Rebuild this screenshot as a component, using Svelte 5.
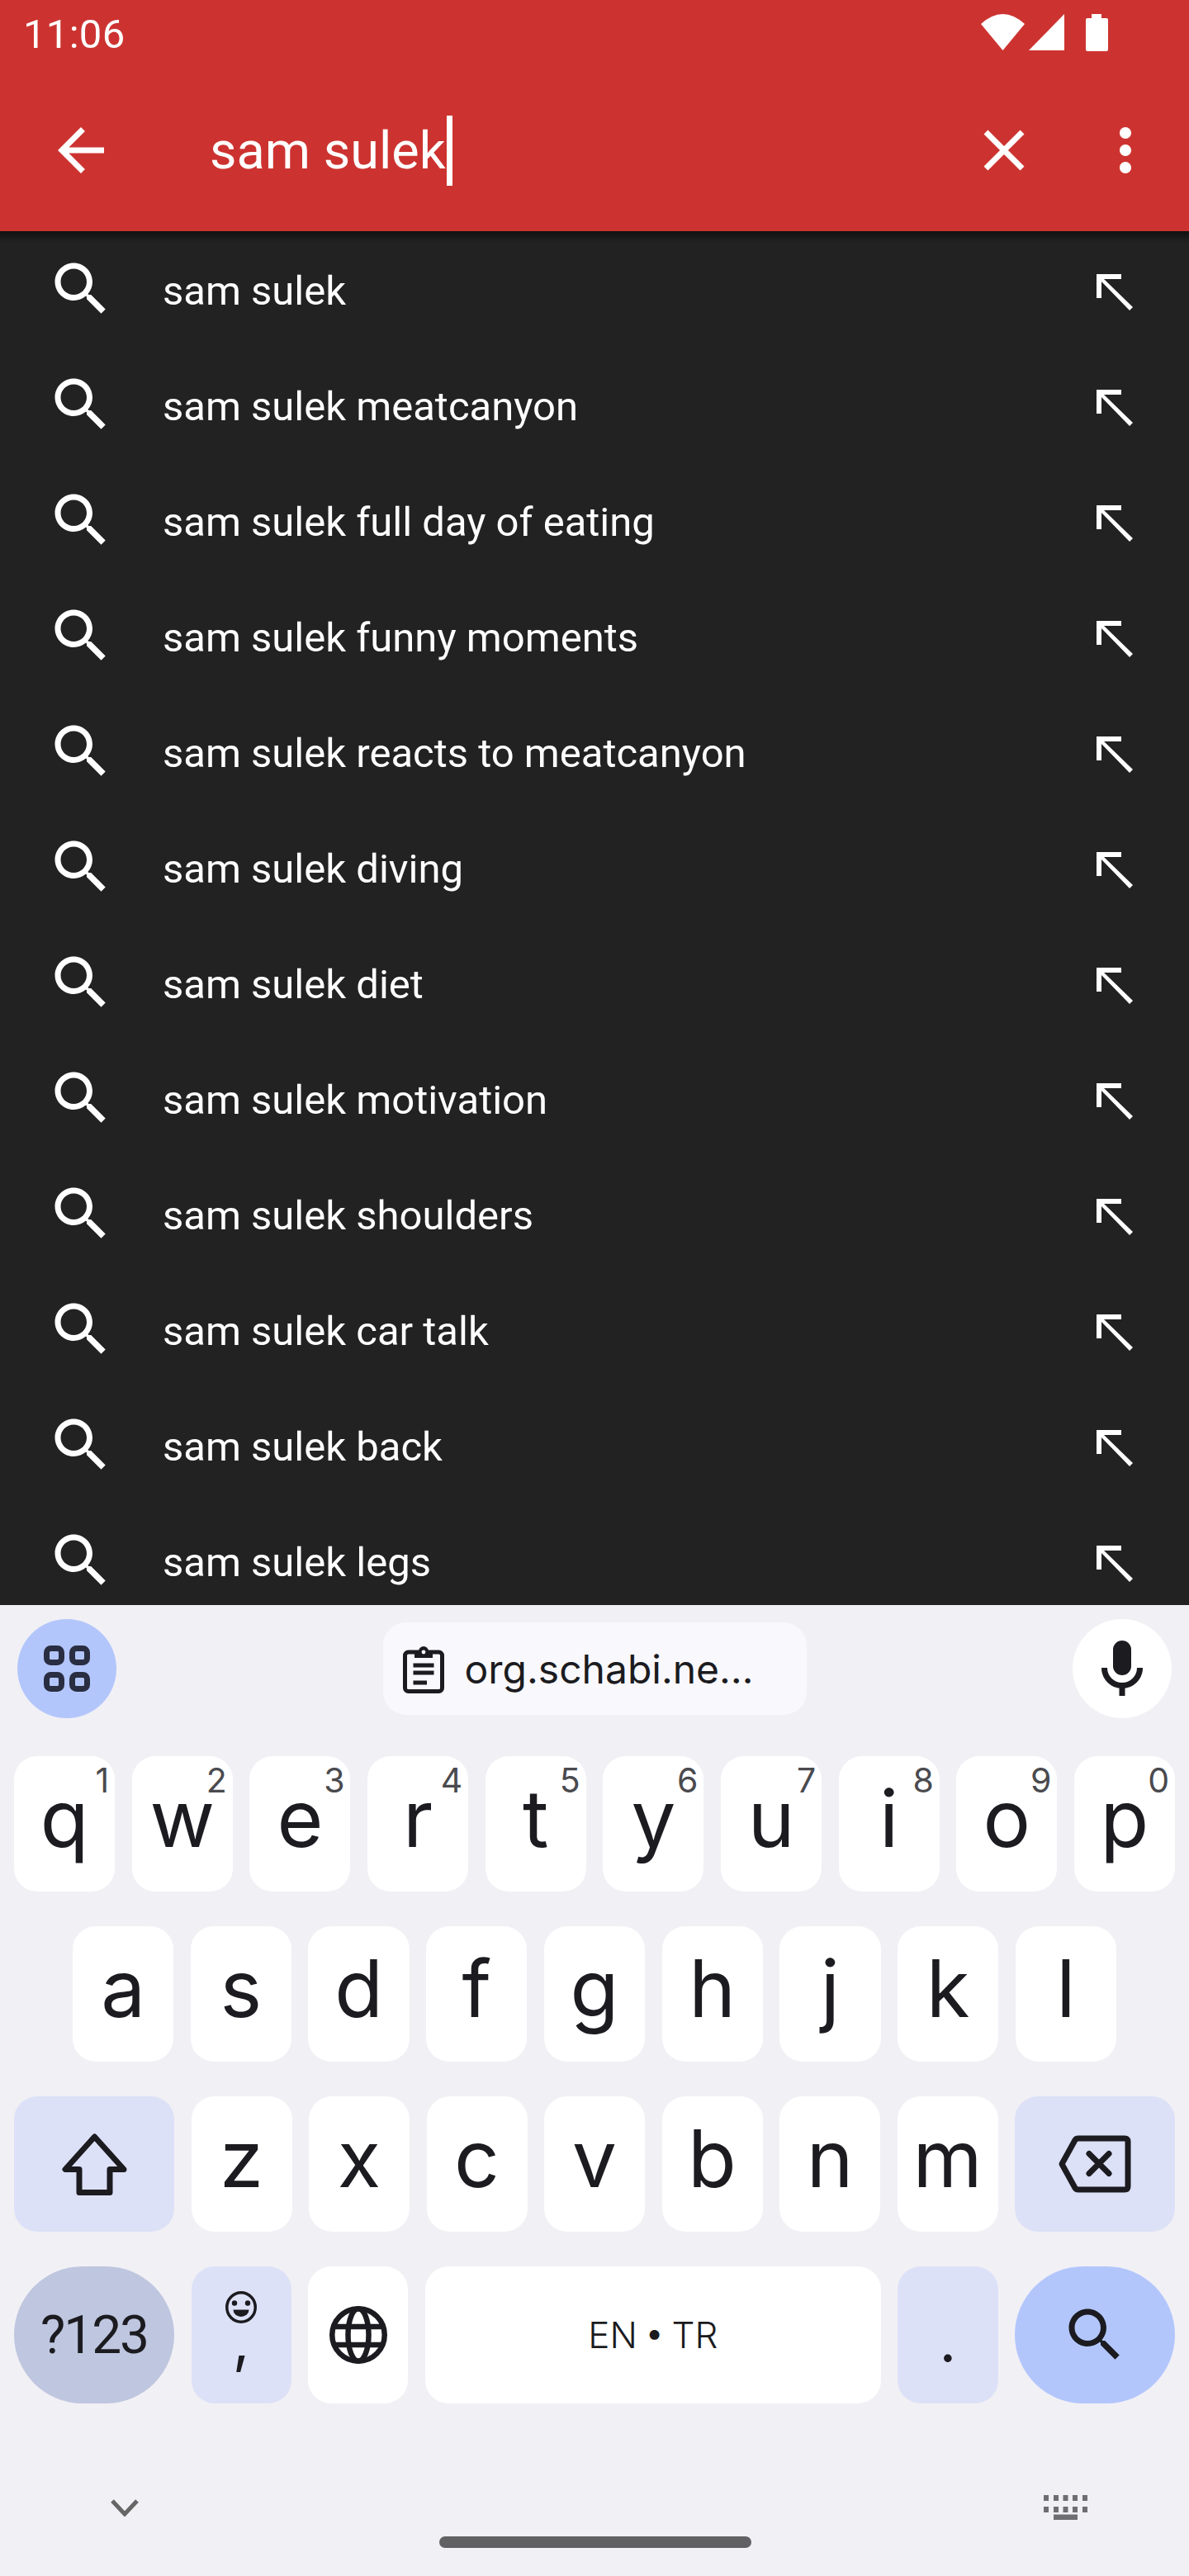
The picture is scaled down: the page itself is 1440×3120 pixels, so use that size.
<script>
	const suggestions = [
		"sam sulek",
		"sam sulek meatcanyon",
		"sam sulek full day of eating",
		"sam sulek funny moments",
		"sam sulek reacts to meatcanyon",
		"sam sulek diving",
		"sam sulek diet",
		"sam sulek motivation",
		"sam sulek shoulders",
		"sam sulek car talk",
		"sam sulek back",
		"sam sulek legs"
	];

	const topRow = [
		["q", "1"], ["w", "2"], ["e", "3"], ["r", "4"], ["t", "5"],
		["y", "6"], ["u", "7"], ["i", "8"], ["o", "9"], ["p", "0"]
	];
	const homeRow = ["a", "s", "d", "f", "g", "h", "j", "k", "l"];
	const lowerRow = ["z", "x", "c", "v", "b", "n", "m"];

	const searchPath = "M15.5 14h-.79l-.28-.27C15.41 12.59 16 11.11 16 9.5 16 5.91 13.09 3 9.5 3S3 5.91 3 9.5 5.91 16 9.5 16c1.61 0 3.09-.59 4.23-1.57l.27.28v.79l5 4.99L20.49 19l-4.99-5zm-6 0C7.01 14 5 11.99 5 9.5S7.01 5 9.5 5 14 7.01 14 9.5 11.99 14 9.5 14z";
</script>

<div class="phone">
	<header class="appbar">
		<div class="status">
			<span class="time">11:06</span>
			<div class="status-icons">
				<svg class="wifi" viewBox="0 0 53 44"><path d="M0 12Q26.5-12 53 12L26.5 44Z" /></svg>
				<svg class="signal" viewBox="0 0 43 44"><path d="M0 44L43 0V44Z" /></svg>
				<svg class="battery" viewBox="0 0 27 45"><path d="M7 0H19V5H25Q27 5 27 7V43Q27 45 25 45H2Q0 45 0 43V7Q0 5 2 5H7Z" /></svg>
			</div>
		</div>
		<div class="toolbar">
			<svg class="tool-icon" viewBox="0 0 24 24"><path d="M20 11H7.83l5.59-5.59L12 4l-8 8 8 8 1.41-1.41L7.83 13H20v-2z" /></svg>
			<div class="query"><span>sam sulek</span><i class="caret"></i></div>
			<svg class="tool-icon" viewBox="0 0 24 24"><path d="M19 6.41L17.59 5 12 10.59 6.41 5 5 6.41 10.59 12 5 17.59 6.41 19 12 13.41 17.59 19 19 17.59 13.41 12z" /></svg>
			<svg class="tool-icon more" viewBox="0 0 24 24"><path d="M12 8c1.1 0 2-.9 2-2s-.9-2-2-2-2 .9-2 2 .9 2 2 2zm0 2c-1.1 0-2 .9-2 2s.9 2 2 2 2-.9 2-2-.9-2-2-2zm0 6c-1.1 0-2 .9-2 2s.9 2 2 2 2-.9 2-2-.9-2-2-2z" /></svg>
		</div>
	</header>

	<main class="results">
		<div class="shadow"></div>
		{#each suggestions as text}
			<div class="row">
				<svg class="row-search" viewBox="0 0 24 24"><path d={searchPath} /></svg>
				<span class="row-text">{text}</span>
				<svg class="row-arrow" viewBox="0 0 44 44"><path d="M0 0H30V6H9L44 40 40 44 6 9V29H0Z" /></svg>
			</div>
		{/each}
	</main>

	<section class="keyboard">
		<div class="suggest">
			<div class="round apps">
				<svg class="apps-icon" viewBox="0 0 56 56">
					<rect x="3.5" y="3.5" width="18" height="17" rx="5" />
					<rect x="34.5" y="3.5" width="18" height="17" rx="5" />
					<rect x="3.5" y="35.5" width="18" height="17" rx="5" />
					<rect x="34.5" y="35.5" width="18" height="17" rx="5" />
				</svg>
			</div>
			<div class="chip">
				<svg class="clip-icon" viewBox="0 0 50 58">
					<rect class="clip-body" x="2.5" y="8" width="45" height="47.5" rx="4" />
					<path class="clip-top" d="M14 7H19A6 6 0 0 1 31 7H36V15H14Z" />
					<circle class="clip-hole" cx="25" cy="8" r="2.4" />
					<path class="clip-lines" d="M12.500 24H37.500M12.500 33H37.500M12.500 45H29" />
				</svg>
				<span class="chip-text">org.schabi.ne…</span>
			</div>
			<div class="round mic">
				<svg class="mic-icon" viewBox="0 0 50 67">
					<rect x="14" y="0" width="22" height="42" rx="11" />
					<path d="M3.500 33A21.500 21.500 0 0 0 46.500 33M25 53V67" />
				</svg>
			</div>
		</div>

		<div class="keys">
			<div class="key-row">
				{#each topRow as [letter, hint]}
					<div class="key letter">{letter}<span class="hint">{hint}</span></div>
				{/each}
			</div>
			<div class="key-row home">
				{#each homeRow as letter}
					<div class="key letter">{letter}</div>
				{/each}
			</div>
			<div class="key-row">
				<div class="key wide tint">
					<svg class="shift" viewBox="0 0 79 76"><path d="M39.500 5L4 44.500H21V72.500H58V44.500H75Z" /></svg>
				</div>
				{#each lowerRow as letter}
					<div class="key letter">{letter}</div>
				{/each}
				<div class="key wide tint">
					<svg class="backspace" viewBox="0 0 88 70">
						<path d="M4 35L20 6Q21 4 24 4H80Q84 4 84 8V62Q84 66 80 66H24Q21 66 20 64Z" />
						<path d="M37 22.500L61 46.500M61 22.500L37 46.500" />
					</svg>
				</div>
			</div>
			<div class="key-row last">
				<div class="key wide pill symbols">?123</div>
				<div class="key tint emoji">
					<svg class="smiley" viewBox="0 0 38 39">
						<ellipse class="face" cx="19" cy="19.500" rx="17.250" ry="17.750" />
						<circle cx="11" cy="14.500" r="3.200" />
						<circle cx="27" cy="14.500" r="3.200" />
						<path d="M9.500 22.500H28.500A9.500 8.500 0 0 1 9.500 22.500Z" />
					</svg>
					<span class="comma">,</span>
				</div>
				<div class="key">
					<svg class="globe" viewBox="0 0 70 70">
						<circle cx="35" cy="35" r="31.750" />
						<ellipse cx="35" cy="35" rx="12.500" ry="31.750" />
						<path d="M6 25H64M6 47H64" />
					</svg>
				</div>
				<div class="key space">EN • TR</div>
				<div class="key tint period">.</div>
				<div class="key wide pill go">
					<svg class="go-icon" viewBox="0 0 24 24"><path d={searchPath} /></svg>
				</div>
			</div>
		</div>

		<div class="navbar">
			<svg class="chevron" viewBox="0 0 34 21"><path d="M2 2L17 18L32 2" /></svg>
			<div class="handle"></div>
			<svg class="kb-switch" viewBox="0 0 53 30">
				<path d="M0 0h6v7H0zM12 0h6v7h-6zM23.500 0h6v7h-6zM35 0h6v7h-6zM47 0h6v7h-6zM0 14h6v7H0zM12 14h6v7h-6zM23.500 14h6v7h-6zM35 14h6v7h-6zM47 14h6v7h-6zM12 23.500h29V30H12z" />
			</svg>
		</div>
	</section>
</div>

<style>
:global(body) {
	margin: 0;
	background: #f1f0f5;
}

.phone {
	width: 1440px;
	height: 3120px;
	display: flex;
	flex-direction: column;
	overflow: hidden;
	font-family: Roboto, "Liberation Sans", sans-serif;
}

/* app bar */
.appbar {
	height: 280px;
	flex-shrink: 0;
	background: #cc3330;
	color: #fff;
}

.status {
	height: 84px;
	display: flex;
	align-items: center;
	justify-content: space-between;
	padding: 0 98px 0 28px;
}

.time {
	font-size: 49px;
	line-height: 88px;
	letter-spacing: 0.3px;
}

.status-icons {
	display: flex;
	align-items: flex-start;
	padding-bottom: 6px;
}

.status-icons svg {
	fill: #fff;
	display: block;
}

.wifi {
	width: 53px;
	height: 44px;
}

.signal {
	width: 43px;
	height: 44px;
	margin-left: 5px;
}

.battery {
	width: 27px;
	height: 45px;
	margin-left: 26px;
}

.toolbar {
	height: 196px;
	display: flex;
	align-items: center;
	padding: 0 35px 0 56px;
	box-sizing: border-box;
}

.tool-icon {
	width: 84px;
	height: 84px;
	fill: #fff;
	flex-shrink: 0;
}

.more {
	margin-left: 63px;
}

.query {
	flex: 1;
	display: flex;
	align-items: center;
	padding-left: 114px;
	font-size: 63px;
	color: #fff;
}

.caret {
	width: 7px;
	height: 85px;
	background: #fff;
	margin-left: 1px;
}

/* suggestion list */
.results {
	position: relative;
	height: 1664px;
	flex-shrink: 0;
	overflow: hidden;
	background: #222;
	padding-top: 2px;
	box-sizing: border-box;
}

.shadow {
	position: absolute;
	top: 0;
	left: 0;
	right: 0;
	height: 14px;
	background: linear-gradient(rgba(0, 0, 0, 0.5), rgba(0, 0, 0, 0));
}

.row {
	height: 140px;
	display: flex;
	align-items: center;
	padding: 0 68px 0 56px;
}

.row-search {
	width: 84px;
	height: 84px;
	fill: #fff;
	margin-top: -5px;
	flex-shrink: 0;
}

.row-text {
	flex: 1;
	margin-left: 57px;
	font-size: 49px;
	color: #fff;
}

.row-arrow {
	width: 44px;
	height: 44px;
	fill: #fff;
	margin-top: 4px;
}

/* keyboard */
.keyboard {
	flex: 1;
	display: flex;
	flex-direction: column;
	background: #f1f0f5;
	color: #1b1b20;
	font-family: Inter, Roboto, sans-serif;
}

.suggest {
	display: flex;
	align-items: center;
	justify-content: space-between;
	height: 120px;
	margin-top: 17px;
	padding: 0 21px;
}

.round {
	width: 120px;
	height: 120px;
	border-radius: 50%;
	display: flex;
	align-items: center;
	justify-content: center;
}

.apps {
	background: #b3c6fc;
}

.apps-icon {
	width: 56px;
	height: 56px;
	fill: none;
	stroke: #2a2e42;
	stroke-width: 7;
}

.mic {
	background: #fff;
}

.mic-icon {
	width: 50px;
	height: 67px;
	fill: #1b1b20;
	margin-top: -1px;
}

.mic-icon path {
	fill: none;
	stroke: #1b1b20;
	stroke-width: 7;
}

.chip {
	width: 513px;
	height: 112px;
	box-sizing: border-box;
	background: #f9f8fd;
	border-radius: 28px;
	display: flex;
	align-items: center;
	padding-left: 24px;
}

.clip-icon {
	width: 50px;
	height: 58px;
	flex-shrink: 0;
	margin-top: 2px;
}

.clip-body {
	fill: none;
	stroke: #1b1b20;
	stroke-width: 5;
}

.clip-top {
	fill: #1b1b20;
}

.clip-hole {
	fill: #f9f8fd;
}

.clip-lines {
	fill: none;
	stroke: #1b1b20;
	stroke-width: 5;
}

.chip-text {
	margin-left: 25px;
	font-size: 48px;
	white-space: nowrap;
}

.keys {
	display: flex;
	flex-direction: column;
	gap: 42px;
	margin-top: 46px;
	padding: 0 17px;
}

.key-row {
	display: flex;
	gap: 20.5px;
	height: 164px;
}

.key-row.home {
	padding: 0 71px;
}

.key-row.last {
	height: 166px;
}

.key {
	position: relative;
	flex: 1 1 0;
	min-width: 0;
	background: #fff;
	border-radius: 28px;
	display: flex;
	align-items: center;
	justify-content: center;
}

.letter {
	font-size: 96px;
	line-height: 1;
	padding-bottom: 14px;
	box-sizing: border-box;
}

.hint {
	position: absolute;
	top: 4px;
	right: 7px;
	font-size: 41px;
	line-height: 50px;
	color: #4a4a4e;
}

.wide {
	flex: 0 0 194px;
}

.tint {
	background: #dde1f7;
}

.pill {
	border-radius: 83px;
}

.symbols {
	background: #bfc6df;
	font-family: Roboto, sans-serif;
	font-size: 64px;
	letter-spacing: -2px;
}

.go {
	background: #b3c6fc;
}

.go-icon {
	width: 84px;
	height: 84px;
	fill: #1b1b20;
}

.shift {
	width: 79px;
	height: 76px;
	fill: none;
	stroke: #1b1b20;
	stroke-width: 7;
	stroke-linejoin: round;
}

.backspace {
	width: 88px;
	height: 70px;
	fill: none;
	stroke: #1b1b20;
	stroke-width: 7;
	stroke-linejoin: round;
	stroke-linecap: round;
}

.emoji {
	flex-direction: column;
	justify-content: flex-start;
}

.smiley {
	width: 38px;
	height: 39px;
	margin-top: 30px;
	fill: #1b1b20;
	flex-shrink: 0;
}

.face {
	fill: none;
	stroke: #1b1b20;
	stroke-width: 3.5;
}

.comma {
	font-size: 72px;
	line-height: 70px;
	margin-top: -15px;
}

.globe {
	width: 70px;
	height: 70px;
	fill: none;
	stroke: #1b1b20;
	stroke-width: 6.5;
}

.space {
	flex: 0 0 552px;
	font-size: 44px;
	font-weight: 300;
	word-spacing: -4px;
}

.period {
	font-size: 72px;
	padding-top: 12px;
	box-sizing: border-box;
}

/* navigation bar */
.navbar {
	display: grid;
	grid-template-columns: 302px 1fr 300px;
	justify-items: center;
	align-items: start;
	padding-top: 111px;
}

.chevron {
	width: 34px;
	height: 21px;
	margin-top: 5px;
	fill: none;
	stroke: #666;
	stroke-width: 5;
}

.handle {
	width: 378px;
	height: 14px;
	margin-top: 50px;
	border-radius: 7px;
	background: #616063;
}

.kb-switch {
	width: 53px;
	height: 30px;
	fill: #6e6e70;
}
</style>
